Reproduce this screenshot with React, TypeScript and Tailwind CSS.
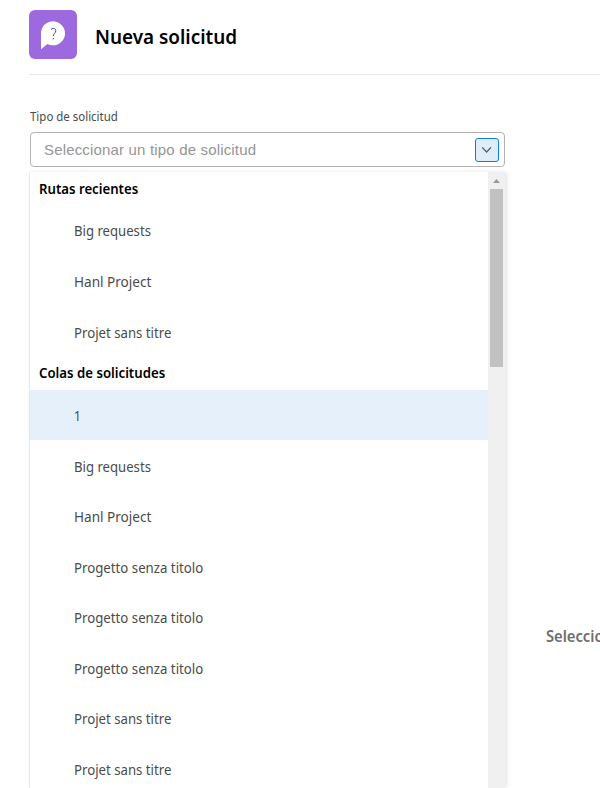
type Item = { label: string; scale: string };

const recent: Item[] = [
  { label: 'Big requests', scale: 'scale-x-[0.876]' },
  { label: 'Hanl Project', scale: 'scale-x-[0.904]' },
  { label: 'Projet sans titre', scale: 'scale-x-[0.88]' },
];

const queues: Item[] = [
  { label: '1', scale: 'scale-x-[0.8]' },
  { label: 'Big requests', scale: 'scale-x-[0.876]' },
  { label: 'Hanl Project', scale: 'scale-x-[0.904]' },
  { label: 'Progetto senza titolo', scale: 'scale-x-[0.882]' },
  { label: 'Progetto senza titolo', scale: 'scale-x-[0.882]' },
  { label: 'Progetto senza titolo', scale: 'scale-x-[0.882]' },
  { label: 'Projet sans titre', scale: 'scale-x-[0.88]' },
  { label: 'Projet sans titre', scale: 'scale-x-[0.88]' },
];

function Option({ item, active }: { item: Item; active?: boolean }) {
  return (
    <li className={`flex h-[50.55px] shrink-0 items-center pl-11 pt-[0.4px] ${active ? 'bg-[#e6f0fa]' : ''}`}>
      <span className={`inline-block origin-left whitespace-nowrap text-[15px] leading-5 text-[#4b4b4b] ${item.scale}`}>{item.label}</span>
    </li>
  );
}

function Heading({ children }: { children: string }) {
  return (
    <h2 className="flex h-[33px] items-center pb-[1.5px] pl-[9px] text-[15px] font-semibold leading-5 text-black">
      <span className="inline-block origin-left scale-x-[0.88] whitespace-nowrap">{children}</span>
    </h2>
  );
}

export default function App() {
  return (
    <div className="flex h-[788px] w-[600px] flex-col overflow-hidden bg-white font-['Noto_Sans',sans-serif]">
      <header className="ml-[29px] flex h-[75px] shrink-0 items-start border-b border-[#e8e8e8] pt-[10px]">
        <div className="flex h-[49px] w-12 items-center justify-center rounded-[6px] bg-[#9d69de]">
          <svg width="48" height="49" viewBox="0 0 48 49">
            <path d="M12 23.2A12 12 0 1 1 18.4 33.9L12 39.3Z" fill="#fff" />
            <path d="M22 19.6C22.6 18.8 23.3 18.4 24.3 18.4C25.9 18.4 26.8 19.3 26.8 20.7C26.8 23 24.4 23.4 24.4 26.2" fill="none" stroke="#4f4580" strokeWidth="1" />
            <path d="M23.8 28h1.2v1.3h-1.2z" fill="#4f4580" />
          </svg>
        </div>
        <h1 className="ml-[18px] mt-[13px] origin-left scale-x-[0.945] whitespace-nowrap text-[20px] font-semibold leading-7 text-black">Nueva solicitud</h1>
      </header>
      <div className="flex min-h-0 flex-1">
        <main className="ml-[29px] flex w-[476px] shrink-0 flex-col">
          <label className="ml-px mt-[34px] h-4 origin-left scale-x-[0.955] text-[12px] leading-4 text-[#4b4b4b]">Tipo de solicitud</label>
          <div className="ml-px mt-[7px] flex h-[35px] w-[475px] shrink-0 items-center justify-between rounded-[4px] border border-[#b3b3b3] pl-[13px] pr-[5px]">
            <span className="pt-px font-['Liberation_Sans',Arial,sans-serif] text-[15px] tracking-[0.17px] text-[#959595]">Seleccionar un tipo de solicitud</span>
            <button className="flex size-6 items-center justify-center rounded-[3px] border border-[#0d7fdb] bg-[#dfedf8]">
              <svg width="12" height="8" viewBox="0 0 12 8" fill="none" stroke="#505e70" strokeWidth="1.3">
                <path d="M1.2 1.4 5.6 6 10 1.4" />
              </svg>
            </button>
          </div>
          <div className="mt-[5px] flex min-h-0 flex-1 border-l border-[#e8e8e8] shadow-[2px_0_4px_rgba(60,80,120,0.14)]">
            <div className="min-h-0 flex-1 overflow-hidden">
              <Heading>Rutas recientes</Heading>
              <ul>{recent.map((item, i) => <Option key={i} item={item} />)}</ul>
              <Heading>Colas de solicitudes</Heading>
              <ul>{queues.map((item, i) => <Option key={i} item={item} active={i === 0} />)}</ul>
            </div>
            <div className="flex w-[17px] flex-col items-center bg-[#f0f0f0]">
              <div className="flex h-[17px] items-center justify-center pt-px">
                <svg width="7" height="4" viewBox="0 0 7 4"><path d="M0 4 3.5 0 7 4z" fill="#9a9a9a" /></svg>
              </div>
              <div className="h-[178px] w-[13px] bg-[#c1c1c1]" />
            </div>
          </div>
        </main>
        <aside className="min-w-0 flex-1 overflow-hidden pl-[41px] pt-[550px]">
          <p className="w-[60px] origin-left scale-x-[0.92] whitespace-nowrap text-[16px] font-semibold leading-[22px] text-[#6e6e6e]">Seleccio</p>
        </aside>
      </div>
    </div>
  );
}
